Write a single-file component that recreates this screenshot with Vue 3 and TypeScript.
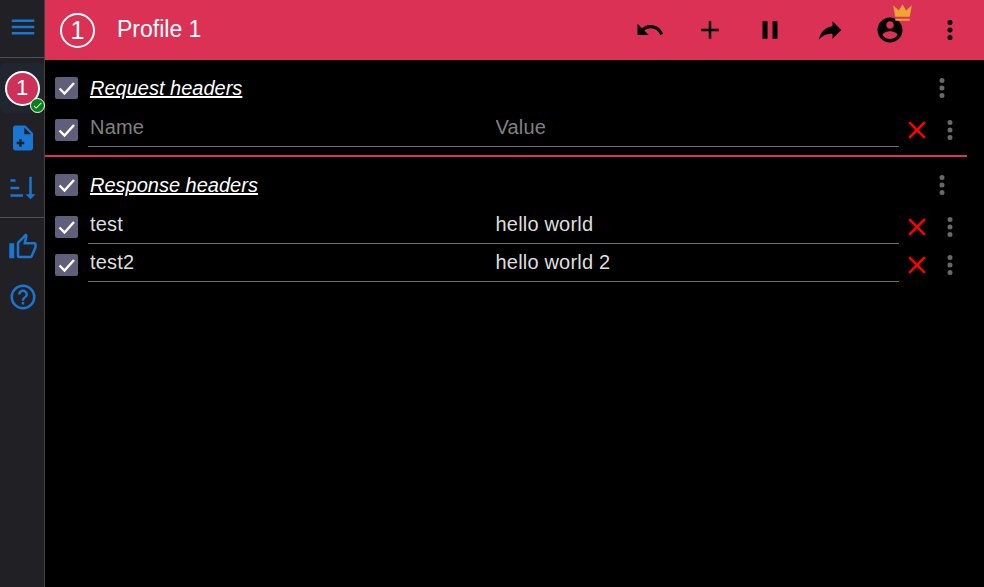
<script setup lang="ts">
import { ref } from 'vue'

interface HeaderRow {
  id: number
  enabled: boolean
  name: string
  value: string
}

interface HeaderSection {
  id: string
  title: string
  enabled: boolean
  rows: HeaderRow[]
}

interface Action {
  id: string
  label: string
  path: string
}

const paths = {
  menu: 'M3 6h18v2H3V6m0 5h18v2H3v-2m0 5h18v2H3v-2Z',
  filePlus: 'M14 2H6c-1.11 0-2 .89-2 2v16c0 1.11.89 2 2 2h12c1.11 0 2-.89 2-2V8l-6-6m-3 17H9v-2H7v-2h2v-2h2v2h2v2h-2v2M13 9V3.500L18.500 9H13Z',
  sort: 'M19 17h3l-4 4-4-4h3V3h2v14M2 17h10v2H2v-2M6 5v2H2V5h4m-4 6h7v2H2v-2Z',
  thumb: 'M5 9v12H1V9h4m4 12a2 2 0 0 1-2-2V9c0-.55.22-1.050.59-1.410L14.170 1l1.060 1.060c.27.27.44.64.44 1.050l-.03.32L14.690 8H21a2 2 0 0 1 2 2v2c0 .26-.05.5-.14.73l-3.020 7.050C19.540 20.500 18.830 21 18 21H9m0-2h9.030L21 12v-2h-8.790l1.130-5.320L9 9.030V19Z',
  help: 'M11 18h2v-2h-2v2m1-16A10 10 0 0 0 2 12a10 10 0 0 0 10 10 10 10 0 0 0 10-10A10 10 0 0 0 12 2m0 18c-4.410 0-8-3.590-8-8s3.590-8 8-8 8 3.590 8 8-3.590 8-8 8m0-14a4 4 0 0 0-4 4h2a2 2 0 0 1 2-2 2 2 0 0 1 2 2c0 2-3 1.750-3 5h2c0-2.250 3-2.500 3-5a4 4 0 0 0-4-4Z',
  dots: 'M12 16a2 2 0 0 1 2 2 2 2 0 0 1-2 2 2 2 0 0 1-2-2 2 2 0 0 1 2-2m0-6a2 2 0 0 1 2 2 2 2 0 0 1-2 2 2 2 0 0 1-2-2 2 2 0 0 1 2-2m0-6a2 2 0 0 1 2 2 2 2 0 0 1-2 2 2 2 0 0 1-2-2 2 2 0 0 1 2-2Z',
  close: 'M19 6.410 17.590 5 12 10.590 6.410 5 5 6.410 10.590 12 5 17.590 6.410 19 12 13.410 17.590 19 19 17.590 13.410 12Z',
  check: 'M21 7 9 19l-5.500-5.500 1.410-1.410L9 16.170 19.590 5.590 21 7Z',
  crown: 'M5 16 3 5l5.500 5L12 4l3.500 6L21 5l-2 11H5m14 3c0 .6-.4 1-1 1H6c-.6 0-1-.4-1-1v-1h14v1Z',
}

const actions: Action[] = [
  { id: 'undo', label: 'Undo', path: 'M12.500 8c-2.650 0-5.050.99-6.900 2.600L2 7v9h9l-3.620-3.620c1.390-1.160 3.160-1.880 5.120-1.880 3.540 0 6.550 2.310 7.600 5.500l2.370-.78C21.080 11.030 17.150 8 12.500 8Z' },
  { id: 'add', label: 'Add', path: 'M19 13h-6v6h-2v-6H5v-2h6V5h2v6h6v2Z' },
  { id: 'pause', label: 'Pause', path: 'M14 19h4V5h-4M6 19h4V5H6v14Z' },
  { id: 'share', label: 'Share', path: 'm21 12-7-7v4C7 10 4 15 3 20c2.500-3.500 6-5.100 11-5.100V19l7-7Z' },
  { id: 'account', label: 'Account', path: 'M12 2C6.480 2 2 6.480 2 12s4.480 10 10 10 10-4.480 10-10S17.520 2 12 2m0 3c1.660 0 3 1.340 3 3s-1.340 3-3 3-3-1.340-3-3 1.340-3 3-3m0 14.200c-2.500 0-4.710-1.280-6-3.220.03-1.990 4-3.080 6-3.080 1.990 0 5.970 1.090 6 3.080-1.290 1.940-3.500 3.220-6 3.220Z' },
  { id: 'more', label: 'More', path: paths.dots },
]

const sections = ref<HeaderSection[]>([
  { id: 'request', title: 'Request headers', enabled: true, rows: [{ id: 1, enabled: true, name: '', value: '' }] },
  {
    id: 'response',
    title: 'Response headers',
    enabled: true,
    rows: [
      { id: 2, enabled: true, name: 'test', value: 'hello world' },
      { id: 3, enabled: true, name: 'test2', value: 'hello world 2' },
    ],
  },
])

function removeRow(section: HeaderSection, id: number) {
  section.rows = section.rows.filter((row) => row.id !== id)
}
</script>

<template>
  <div class="app">
    <nav class="sidebar">
      <div class="side-group menu-group">
        <button class="side-btn"><svg class="icon" viewBox="0 0 24 24"><path :d="paths.menu" /></svg></button>
      </div>
      <div class="side-group profiles">
        <button class="profile-btn">
          <span class="avatar small">1</span>
          <span class="status"><svg viewBox="0 0 24 24"><path :d="paths.check" /></svg></span>
        </button>
        <button class="side-btn"><svg class="icon" viewBox="0 0 24 24"><path :d="paths.filePlus" /></svg></button>
        <button class="side-btn"><svg class="icon" viewBox="0 0 24 24"><path :d="paths.sort" /></svg></button>
      </div>
      <div class="side-group links">
        <button class="side-btn"><svg class="icon" viewBox="0 0 24 24"><path :d="paths.thumb" /></svg></button>
        <button class="side-btn"><svg class="icon" viewBox="0 0 24 24"><path :d="paths.help" /></svg></button>
      </div>
    </nav>
    <div class="main">
      <header class="toolbar">
        <span class="avatar">1</span>
        <h1 class="title">Profile 1</h1>
        <div class="actions">
          <button v-for="action in actions" :key="action.id" class="action" :aria-label="action.label">
            <svg class="icon" viewBox="0 0 24 24"><path :d="action.path" /></svg>
            <svg v-if="action.id === 'account'" class="crown" viewBox="0 0 24 24"><path :d="paths.crown" /></svg>
          </button>
        </div>
      </header>
      <main class="content">
        <section v-for="section in sections" :key="section.id" class="section">
          <div class="section-head">
            <button class="checkbox" @click="section.enabled = !section.enabled">
              <svg v-if="section.enabled" viewBox="0 0 23 22"><path d="m4.500 11.500 5 5L19 6" /></svg>
            </button>
            <h2 class="section-title">{{ section.title }}</h2>
            <button class="more"><svg class="icon" viewBox="0 0 24 24"><path :d="paths.dots" /></svg></button>
          </div>
          <div v-for="row in section.rows" :key="row.id" class="row">
            <button class="checkbox" @click="row.enabled = !row.enabled">
              <svg v-if="row.enabled" viewBox="0 0 23 22"><path d="m4.500 11.500 5 5L19 6" /></svg>
            </button>
            <input v-model="row.name" class="field" placeholder="Name" />
            <input v-model="row.value" class="field" placeholder="Value" />
            <button class="remove" @click="removeRow(section, row.id)"><svg class="icon" viewBox="0 0 24 24"><path :d="paths.close" /></svg></button>
            <button class="more"><svg class="icon" viewBox="0 0 24 24"><path :d="paths.dots" /></svg></button>
          </div>
        </section>
      </main>
    </div>
  </div>
</template>

<style>
body {
  background: #000;
  overflow: hidden;
}
</style>

<style scoped>
.app {
  display: flex;
  height: 100vh;
  background: #000;
  color: #fff;
  font-family: "Liberation Sans", Arial, sans-serif;
}
button {
  display: flex;
  align-items: center;
  justify-content: center;
  flex: none;
  margin: 0;
  padding: 0;
  border: 0;
  background: none;
  color: inherit;
  font: inherit;
}
.icon {
  display: block;
  width: 30px;
  height: 30px;
  fill: currentColor;
}
.sidebar {
  box-sizing: border-box;
  flex: none;
  width: 45px;
  border-right: 1px solid #424246;
  background: #212025;
  color: #1976d2;
}
.side-group + .side-group {
  border-top: 1px solid #515155;
}
.menu-group {
  box-sizing: border-box;
  height: 57px;
  padding-top: 2px;
}
.profiles {
  box-sizing: border-box;
  height: 160px;
  padding-top: 5px;
}
.links {
  padding-top: 4px;
}
.side-btn {
  width: 46px;
  height: 50px;
}
.profile-btn {
  position: relative;
  width: 44px;
  height: 50px;
  border-radius: 5px;
  background: #1f2630;
}
.avatar {
  box-sizing: border-box;
  display: flex;
  align-items: center;
  justify-content: center;
  width: 35px;
  height: 35px;
  flex: none;
  border: 2px solid #fff;
  border-radius: 50%;
  background: #db3154;
  color: #fff;
  font-size: 25px;
  line-height: 1;
}
.avatar.small {
  background: #cd3059;
  font-size: 22px;
}
.status {
  position: absolute;
  top: 35px;
  left: 30px;
  box-sizing: border-box;
  width: 15px;
  height: 15px;
  border: 1px solid #fff;
  border-radius: 50%;
  background: #078015;
}
.status svg {
  display: block;
  margin: 1px;
  width: 11px;
  height: 11px;
  fill: #fff;
}
.main {
  flex: 1;
  min-width: 0;
}
.toolbar {
  display: flex;
  align-items: center;
  box-sizing: border-box;
  height: 60px;
  padding-left: 15px;
  padding-right: 4px;
  background: #db3154;
}
.title {
  flex: 1;
  margin: 0 0 2px 22px;
  font-size: 23px;
  font-weight: 400;
  line-height: 30px;
}
.actions {
  display: flex;
  color: #000;
}
.action {
  position: relative;
  width: 60px;
  height: 60px;
}
.crown {
  position: absolute;
  top: 0;
  left: 30px;
  width: 25px;
  height: 25px;
  fill: #eba535;
}
.content {
  width: 922px;
}
.section {
  box-sizing: border-box;
  padding: 5px 2px 6px 10px;
}
.section + .section {
  border-top: 2px solid #db3154;
}
.section-head {
  display: flex;
  align-items: center;
  height: 46px;
  padding-right: 8px;
}
.row {
  display: flex;
  align-items: center;
  height: 38px;
}
.checkbox {
  width: 23px;
  height: 22px;
  border-radius: 2px;
  background: #5f5f7b;
}
.checkbox svg {
  width: 23px;
  height: 22px;
  fill: none;
  stroke: #fff;
  stroke-width: 2.4;
}
.section-title {
  flex: 1;
  margin: 0 0 0 12px;
  font-size: 20px;
  font-style: italic;
  font-weight: 400;
  line-height: 24px;
  text-decoration: underline;
}
.more {
  width: 30px;
  color: #696969;
}
.field {
  box-sizing: border-box;
  flex: 1;
  min-width: 0;
  height: 34px;
  padding: 0 2px 5px;
  border: 0;
  border-bottom: 1px solid #707070;
  outline: 0;
  background: none;
  color: #dedede;
  font: 20px "Liberation Sans", Arial, sans-serif;
  letter-spacing: 0.19px;
}
.field::placeholder {
  color: #808080;
  opacity: 1;
}
.checkbox + .field {
  margin-left: 10px;
}
.remove {
  width: 36px;
  color: #f00;
}
</style>
